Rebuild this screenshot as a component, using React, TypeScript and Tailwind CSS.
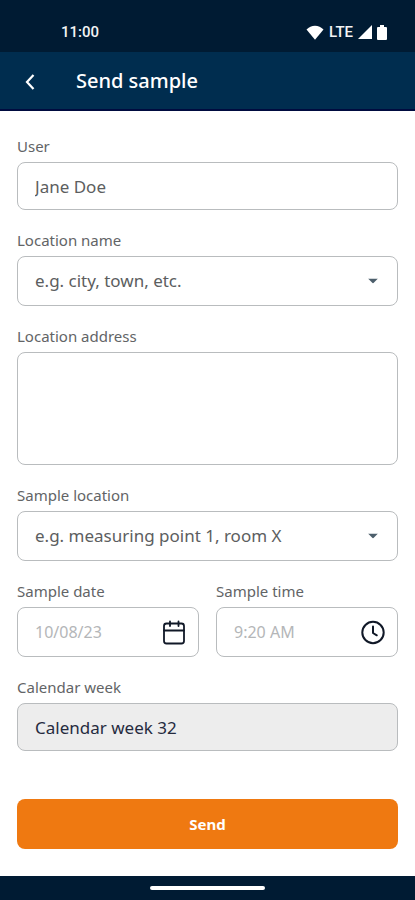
import { useId, useState } from "react";
import type { ReactNode } from "react";

const fieldBase =
  "block w-full rounded-lg border border-[#b9bcbe] bg-white px-[17px] text-[#5c5e60] outline-none focus:border-[#002d4f]";

function Field({ id, label, children }: { id: string; label: string; children: ReactNode }) {
  return (
    <div className="flex min-w-0 flex-col gap-1.5">
      <label htmlFor={id} className="text-[15px] leading-5 text-[#626466]">
        {label}
      </label>
      {children}
    </div>
  );
}

function SelectField({ label, placeholder, options }: { label: string; placeholder: string; options: string[] }) {
  const id = useId();
  const [value, setValue] = useState("");
  return (
    <Field id={id} label={label}>
      <div className="relative">
        <select
          id={id}
          value={value}
          onChange={(e) => setValue(e.target.value)}
          className={`${fieldBase} h-[50px] appearance-none pr-10 text-[17px]`}
        >
          <option value="" disabled>
            {placeholder}
          </option>
          {options.map((option) => (
            <option key={option}>{option}</option>
          ))}
        </select>
        <svg
          viewBox="0 0 10 5"
          className="pointer-events-none absolute top-1/2 right-5 h-[5px] w-[10px] -translate-y-1/2 fill-[#4d5f6c]"
          aria-hidden="true"
        >
          <path d="M0 0h10L5 5z" />
        </svg>
      </div>
    </Field>
  );
}

function PickerField({
  label,
  placeholder,
  action,
  icon,
}: {
  label: string;
  placeholder: string;
  action: string;
  icon: ReactNode;
}) {
  const id = useId();
  return (
    <Field id={id} label={label}>
      <div className="relative">
        <input
          id={id}
          type="text"
          placeholder={placeholder}
          className={`${fieldBase} h-[50px] pr-12 text-base placeholder:text-[#b4b6b8]`}
        />
        <button
          type="button"
          aria-label={action}
          className="absolute top-1/2 right-3 -translate-y-1/2 text-[#101827]"
        >
          {icon}
        </button>
      </div>
    </Field>
  );
}

function CalendarIcon() {
  return (
    <svg viewBox="0 0 26 26" className="size-[26px]" fill="none" stroke="currentColor" strokeWidth="1.8" strokeLinecap="round" aria-hidden="true">
      <rect x="3" y="4.500" width="20" height="20" rx="2.500" />
      <path d="M3 11.500h20M9 2.500v4.500M17.500 2.500v4.500" />
    </svg>
  );
}

function ClockIcon() {
  return (
    <svg viewBox="0 0 26 26" className="size-[26px]" fill="none" stroke="currentColor" strokeWidth="2" strokeLinecap="round" strokeLinejoin="round" aria-hidden="true">
      <circle cx="13" cy="13.500" r="10.700" />
      <path d="M13 7.500v6.500l3.800 2.300" />
    </svg>
  );
}

function StatusBar() {
  return (
    <div className="flex h-[52px] items-end justify-between bg-[#001b33] pr-7 pb-2.5 pl-[61px] text-[#f3f4f5]">
      <span className="text-[15px] leading-5 font-medium font-['Roboto',sans-serif]">11:00</span>
      <div className="flex items-center gap-[5px]">
        <svg viewBox="0 0 18 15" className="h-[15px] w-[18px] fill-white" aria-hidden="true">
          <path d="M9 14.800 0.500 4.600C2.800 2.200 5.800 0.800 9 0.800s6.200 1.400 8.500 3.800z" />
        </svg>
        <span className="text-[15px] leading-5 font-medium font-['Roboto',sans-serif]">LTE</span>
        <svg viewBox="0 0 14 14" className="h-[14px] w-[14px] fill-white" aria-hidden="true">
          <path d="M14 0v14H0z" />
        </svg>
        <svg viewBox="0 0 10 15" className="h-[15px] w-[10px] fill-white" aria-hidden="true">
          <path d="M3 0h4v2h2q1 0 1 1v11q0 1-1 1H1q-1 0-1-1V3q0-1 1-1h2z" />
        </svg>
      </div>
    </div>
  );
}

export default function App() {
  const userId = useId();
  const addressId = useId();
  const weekId = useId();
  return (
    <div className="flex min-h-screen flex-col bg-white font-['Noto_Sans',sans-serif]">
      <StatusBar />
      <header className="flex h-[59px] items-center border-b-2 border-[#000b3f] bg-[#002d4f] px-4 text-white">
        <button type="button" aria-label="Back" className="p-1">
          <svg viewBox="0 0 20 20" className="size-5" fill="none" stroke="currentColor" strokeWidth="2.200" aria-hidden="true">
            <path d="M13.500 4 7 11l6.500 7" />
          </svg>
        </button>
        <h1 className="ml-8 text-xl font-medium">Send sample</h1>
      </header>

      <form className="flex flex-1 flex-col gap-5 px-[17px] py-[25px]" onSubmit={(e) => e.preventDefault()}>
        <Field id={userId} label="User">
          <input id={userId} type="text" placeholder="Jane Doe" className={`${fieldBase} h-12 text-[17px] placeholder:text-[#5c5e60]`} />
        </Field>
        <SelectField label="Location name" placeholder="e.g. city, town, etc." options={["City", "Town"]} />
        <Field id={addressId} label="Location address">
          <textarea id={addressId} className={`${fieldBase} h-[113px] resize-none py-3 text-[17px]`} />
        </Field>
        <SelectField
          label="Sample location"
          placeholder="e.g. measuring point 1, room X"
          options={["Measuring point 1", "Room X"]}
        />
        <div className="grid grid-cols-2 gap-[17px]">
          <PickerField label="Sample date" placeholder="10/08/23" action="Choose date" icon={<CalendarIcon />} />
          <PickerField label="Sample time" placeholder="9:20 AM" action="Choose time" icon={<ClockIcon />} />
        </div>
        <Field id={weekId} label="Calendar week">
          <input
            id={weekId}
            type="text"
            readOnly
            value="Calendar week 32"
            className="block h-12 w-full rounded-lg border border-[#b9bcbe] bg-[#ededed] px-[17px] text-[17px] text-[#262b3f] outline-none"
          />
        </Field>
        <button type="submit" className="mt-7 h-[50px] w-full rounded-lg bg-[#ef7911] text-[15px] font-bold text-white">
          Send
        </button>
      </form>

      <div className="flex h-6 items-center justify-center bg-[#001b33]">
        <div className="h-1 w-[115px] rounded-full bg-white" />
      </div>
    </div>
  );
}
